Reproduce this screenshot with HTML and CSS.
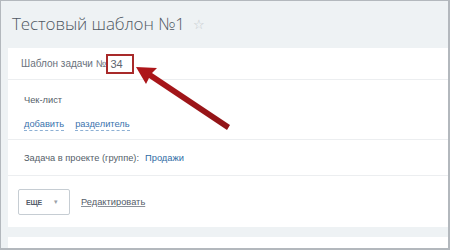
FILE: index.html
```html
<!DOCTYPE html>
<html lang="ru">
<head>
<meta charset="utf-8">
<link rel="stylesheet" href="styles.css">
</head>
<body>
<div class="frame">
  <header class="title-bar">
    <h1 class="title">Тестовый шаблон №1</h1>
    <span class="star">☆</span>
  </header>
  <div class="card">
    <div class="row row-head">
      <span class="label">Шаблон задачи №</span><span class="num">34</span>
    </div>
    <div class="row row-check">
      <div class="label">Чек-лист</div>
      <div class="links">
        <a class="dash-link">добавить</a>
        <a class="dash-link">разделитель</a>
      </div>
    </div>
    <div class="row row-project">
      <span class="label">Задача в проекте (группе):</span>
      <a class="blue-link">Продажи</a>
    </div>
    <div class="row row-footer">
      <button class="more-btn"><span class="more-text">ЕЩЕ</span><span class="caret">▾</span></button>
      <a class="edit-link">Редактировать</a>
    </div>
  </div>
  <div class="card card-next"></div>
  <svg class="arrow" width="450" height="250" viewBox="0 0 450 250">
    <defs>
      <linearGradient id="g" x1="0" y1="0" x2="1" y2="1">
        <stop offset="0" stop-color="#b0161a"/>
        <stop offset="1" stop-color="#8e1417"/>
      </linearGradient>
    </defs>
    <polygon points="136,67 157,68 152,73 230,125 227,130 149,78 146,84" fill="url(#g)"/>
  </svg>
</div>
</body>
</html>
```

FILE: styles.css
```css
* { box-sizing: border-box; }
html, body { margin: 0; padding: 0; }
body {
  width: 450px;
  height: 250px;
  overflow: hidden;
  font-family: "Liberation Sans", Arial, sans-serif;
}
.frame {
  position: relative;
  width: 450px;
  height: 250px;
  background: #eef2f4;
  border: 1px solid #b3b8bd;
  border-right-width: 2px;
  border-bottom-width: 2px;
  display: flex;
  flex-direction: column;
}
.title-bar {
  height: 47px;
  display: flex;
  align-items: center;
  padding: 0 0 2px 11px;
  gap: 8px;
}
.title {
  margin: 0;
  font-family: "Open Sans", sans-serif;
  font-weight: 300;
  font-size: 17px;
  color: #4f5863;
  letter-spacing: -0.1px;
}
.star {
  font-size: 13px;
  color: #c3c8cd;
  margin-top: 2px;
}
.card {
  background: #fff;
  margin-left: 7px;
  display: flex;
  flex-direction: column;
}
.row {
  border-bottom: 1px solid #eceef0;
  font-size: 9.3px;
  color: #555e69;
}
.row-head {
  height: 32px;
  display: flex;
  align-items: center;
  padding-left: 13px;
  font-size: 10px;
  color: #6a727c;
}
.num {
  display: inline-block;
  border: 2px solid #a82a2a;
  width: 28px;
  height: 20px;
  line-height: 16px;
  padding-left: 2px;
  font-size: 11px;
  color: #5d6570;
}
.row-check {
  height: 60px;
  padding: 15px 0 0 16px;
}
.row-check .label { line-height: 11px; }
.links {
  margin-top: 13px;
  display: flex;
  gap: 11px;
}
.dash-link {
  color: #3b73ad;
  border-bottom: 1px dashed #8db0d4;
  line-height: 11px;
}
.row-project {
  height: 36px;
  display: flex;
  align-items: center;
  padding-left: 16px;
  gap: 6px;
}
.blue-link {
  color: #2f6ca5;
}
.row-footer {
  border-bottom: none;
  height: 51px;
  display: flex;
  align-items: center;
  padding: 1px 0 0 10px;
  gap: 11px;
}
.more-btn {
  width: 52px;
  height: 26px;
  background: #fff;
  border: 1px solid #c6cdd3;
  border-radius: 2px;
  font-family: "Liberation Sans", Arial, sans-serif;
  color: #535c69;
  padding: 0 11px 0 7px;
  display: flex;
  align-items: center;
  justify-content: space-between;
}
.more-text {
  font-size: 7px;
  font-weight: 700;
  letter-spacing: -0.2px;
}
.caret {
  font-size: 7px;
  color: #9aa1a8;
}
.edit-link {
  color: #535c69;
  text-decoration: underline;
  text-decoration-color: #8a9099;
}
.card-next {
  margin-top: 10px;
  flex: 1;
}
.arrow {
  position: absolute;
  left: -1px;
  top: -1px;
  pointer-events: none;
}
```
